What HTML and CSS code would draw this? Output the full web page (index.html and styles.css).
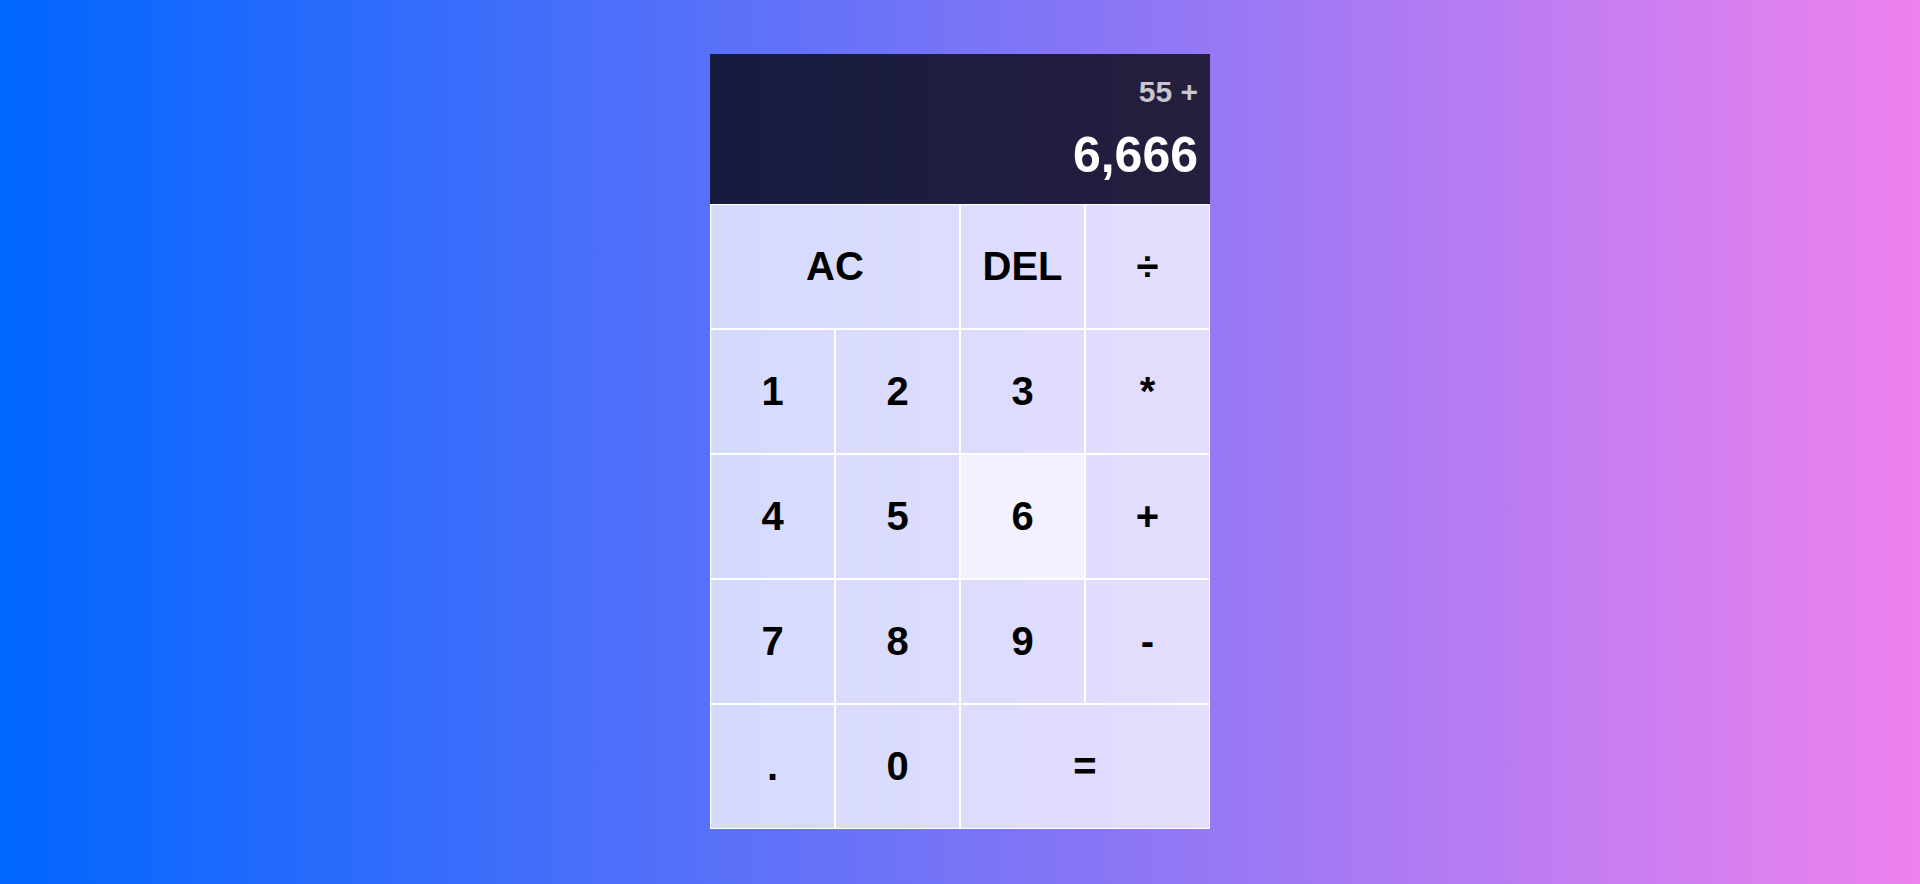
FILE: index.html
```html
<!DOCTYPE html>
<html lang="en">
<head>
<meta charset="UTF-8">
<title>Calculator</title>
<link rel="stylesheet" href="styles.css">
</head>
<body>
<div class="calculator-grid">
  <div class="output">
    <div class="previous-operand">55 +</div>
    <div class="current-operand">6,666</div>
  </div>
  <button class="span-two">AC</button>
  <button>DEL</button>
  <button>÷</button>
  <button>1</button>
  <button>2</button>
  <button>3</button>
  <button>*</button>
  <button>4</button>
  <button>5</button>
  <button class="hover">6</button>
  <button>+</button>
  <button>7</button>
  <button>8</button>
  <button>9</button>
  <button>-</button>
  <button>.</button>
  <button>0</button>
  <button class="span-two">=</button>
</div>
</body>
</html>
```
FILE: styles.css
```css
*, *::before, *::after {
  box-sizing: border-box;
  font-family: "Liberation Sans", Arial, sans-serif;
  font-weight: bold;
}

body {
  margin: 0;
  padding: 0;
  background: linear-gradient(to right, #0066ff, #ee82ee);
}

.calculator-grid {
  display: grid;
  justify-content: center;
  align-content: center;
  min-height: 100vh;
  padding-bottom: 1px;
  grid-template-columns: repeat(4, 125px);
  grid-template-rows: 150px repeat(5, 125px);
}

.calculator-grid > button {
  cursor: pointer;
  font-size: 40px;
  border: 1px solid white;
  outline: none;
  color: #000;
  background-color: rgba(255, 255, 255, 0.75);
  padding: 0;
}

.calculator-grid > button.hover {
  background-color: rgba(255, 255, 255, 0.9);
}

.span-two {
  grid-column: span 2;
}

.output {
  grid-column: 1 / -1;
  background-color: rgba(0, 0, 0, 0.75);
  display: flex;
  align-items: flex-end;
  justify-content: space-around;
  flex-direction: column;
  padding: 12px;
  word-wrap: break-word;
  word-break: break-all;
}

.previous-operand {
  color: rgba(255, 255, 255, 0.75);
  font-size: 30px;
}

.current-operand {
  color: white;
  font-size: 50px;
}
```
